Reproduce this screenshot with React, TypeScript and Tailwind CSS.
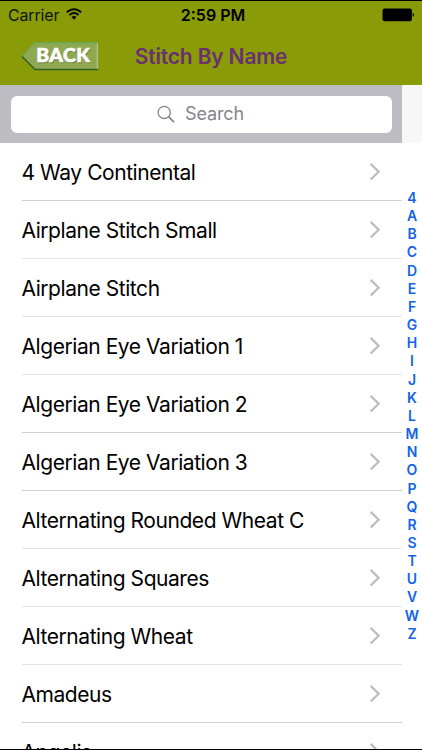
const stitches = [
  { name: '4 Way Continental', line: 'bg-[#d2d2d4]' },
  { name: 'Airplane Stitch Small', line: 'bg-[#e4e4e7]' },
  { name: 'Airplane Stitch', line: 'bg-[#e4e4e7]' },
  { name: 'Algerian Eye Variation 1', line: 'bg-[#e4e4e7]' },
  { name: 'Algerian Eye Variation 2', line: 'bg-[#d2d2d4]' },
  { name: 'Algerian Eye Variation 3', line: 'bg-[#d2d2d4]' },
  { name: 'Alternating Rounded Wheat C', line: 'bg-[#e4e4e7]' },
  { name: 'Alternating Squares', line: 'bg-[#e4e4e7]' },
  { name: 'Alternating Wheat', line: 'bg-[#e4e4e7]' },
  { name: 'Amadeus', line: 'bg-[#d2d2d4]' },
  { name: 'Angelis', line: 'bg-[#e4e4e7]' },
];

const indexLetters = '4ABCDEFGHIJKLMNOPQRSTUVWZ'.split('');

function StatusBar() {
  return (
    <div className="flex h-[28px] items-center justify-between pl-[8px] pr-[7px] text-[16px] text-[#111500]">
      <div className="flex flex-1 items-center gap-[7px]">
        <span className="tracking-[-0.15px]">Carrier</span>
        <svg className="-mt-[2px]" width="16" height="12" viewBox="0 0 16 12" fill="none" stroke="#0b0d00" strokeWidth="2">
          <path d="M0.8 4.4C4.9 0.1 11.1 0.1 15.2 4.4" />
          <path d="M3.4 7.1C6 4.4 10 4.4 12.6 7.1" />
          <path d="M8 11.8L5.4 9.1C6.9 7.7 9.1 7.7 10.6 9.1Z" fill="#0b0d00" stroke="none" />
        </svg>
      </div>
      <span className="pl-[3px] font-semibold text-black">2:59 PM</span>
      <div className="flex flex-1 justify-end">
        <svg className="-mt-px" width="33" height="14" viewBox="0 0 33 14">
          <rect x="0.5" y="0.6" width="29.4" height="12.6" rx="2" fill="#000" />
          <path d="M30.7 5C32.5 5.3 32.5 8.5 30.7 8.8Z" fill="#000" />
        </svg>
      </div>
    </div>
  );
}

function BackButton() {
  return (
    <button aria-label="Back" className="block">
      <svg width="78" height="29" viewBox="0 0 78 29">
        <path d="M1 14.5L14 1H76.5V27.5H14Z" fill="#8fa950" />
        <path d="M1 14.5L14 1H76.5" fill="none" stroke="#6eaa62" strokeWidth="1.3" />
        <path d="M76.4 1V27" fill="none" stroke="#a4c994" strokeWidth="1.3" />
        <path d="M1 14.5L14 27.5H77" fill="none" stroke="#315f24" strokeWidth="1.5" />
        <text x="16" y="20.8" textLength="53.5" lengthAdjust="spacing" fill="#6c7d38" stroke="#6c7d38" strokeWidth="0.6" fontFamily="Lato" fontWeight="900" fontSize="19.5">BACK</text>
        <text x="15.2" y="20" textLength="53.5" lengthAdjust="spacing" fill="#fff" stroke="#fff" strokeWidth="0.7" fontFamily="Lato" fontWeight="900" fontSize="19.5">BACK</text>
      </svg>
    </button>
  );
}

function SearchBar() {
  return (
    <div className="flex h-[58px] bg-[#f7f7f8]">
      <div className="w-[402px] bg-[#bdbcc3] pl-[11px] pr-[10px] pt-[11px]">
        <div className="flex h-[37px] items-center justify-center rounded-[6px] bg-white pb-[2px] pr-[2px] text-[#85858a]">
          <svg width="18" height="18" viewBox="0 0 18 18" fill="none" stroke="currentColor">
            <circle cx="7.2" cy="7.4" r="6.1" strokeWidth="1.3" />
            <path d="M11.7 11.9L17 17.2" strokeWidth="1.8" />
          </svg>
          <span className="ml-[10px] text-[18px] leading-[24px] tracking-[-0.15px]">Search</span>
        </div>
      </div>
    </div>
  );
}

export default function App() {
  return (
    <div className="relative flex h-[750px] w-[422px] flex-col overflow-hidden border-y border-black bg-white font-['Inter','Liberation_Sans',sans-serif]">
      <header className="h-[84px] shrink-0 bg-[#899c08]">
        <StatusBar />
        <div className="grid h-[54px] grid-cols-[114px_1fr_114px] items-center">
          <div className="pl-[21px]"><BackButton /></div>
          <h1 className="whitespace-nowrap pt-[2px] text-center text-[21px] font-semibold tracking-[-0.18px] text-[#6b3070]">Stitch By Name</h1>
        </div>
      </header>
      <div className="shrink-0"><SearchBar /></div>
      <main className="flex min-h-0 flex-1">
        <ul className="w-[402px]">
          {stitches.map((s) => (
            <li key={s.name} className="flex h-[58px] flex-col pl-[22px]">
              <div className="flex flex-1 items-center justify-between pr-[20px]">
                <span className="-ml-[0.5px] whitespace-nowrap pt-[2px] text-[21px] leading-[28px] tracking-[-0.44px] text-black">{s.name}</span>
                <svg width="13" height="18" viewBox="0 0 13 18" fill="none" stroke="#bbbbc0" strokeWidth="2.2">
                  <path d="M1.7 0.9L9.6 8.7L1.7 16.5" />
                </svg>
              </div>
              <div className={`h-px ${s.line}`} />
            </li>
          ))}
        </ul>
        <nav className="flex w-[20px] flex-col items-center pt-[46px] text-[14px] font-semibold text-[#1263e8]">
          {indexLetters.map((l) => (
            <span key={l} className="h-[18.17px] shrink-0 leading-[18px]">{l}</span>
          ))}
        </nav>
      </main>
    </div>
  );
}
